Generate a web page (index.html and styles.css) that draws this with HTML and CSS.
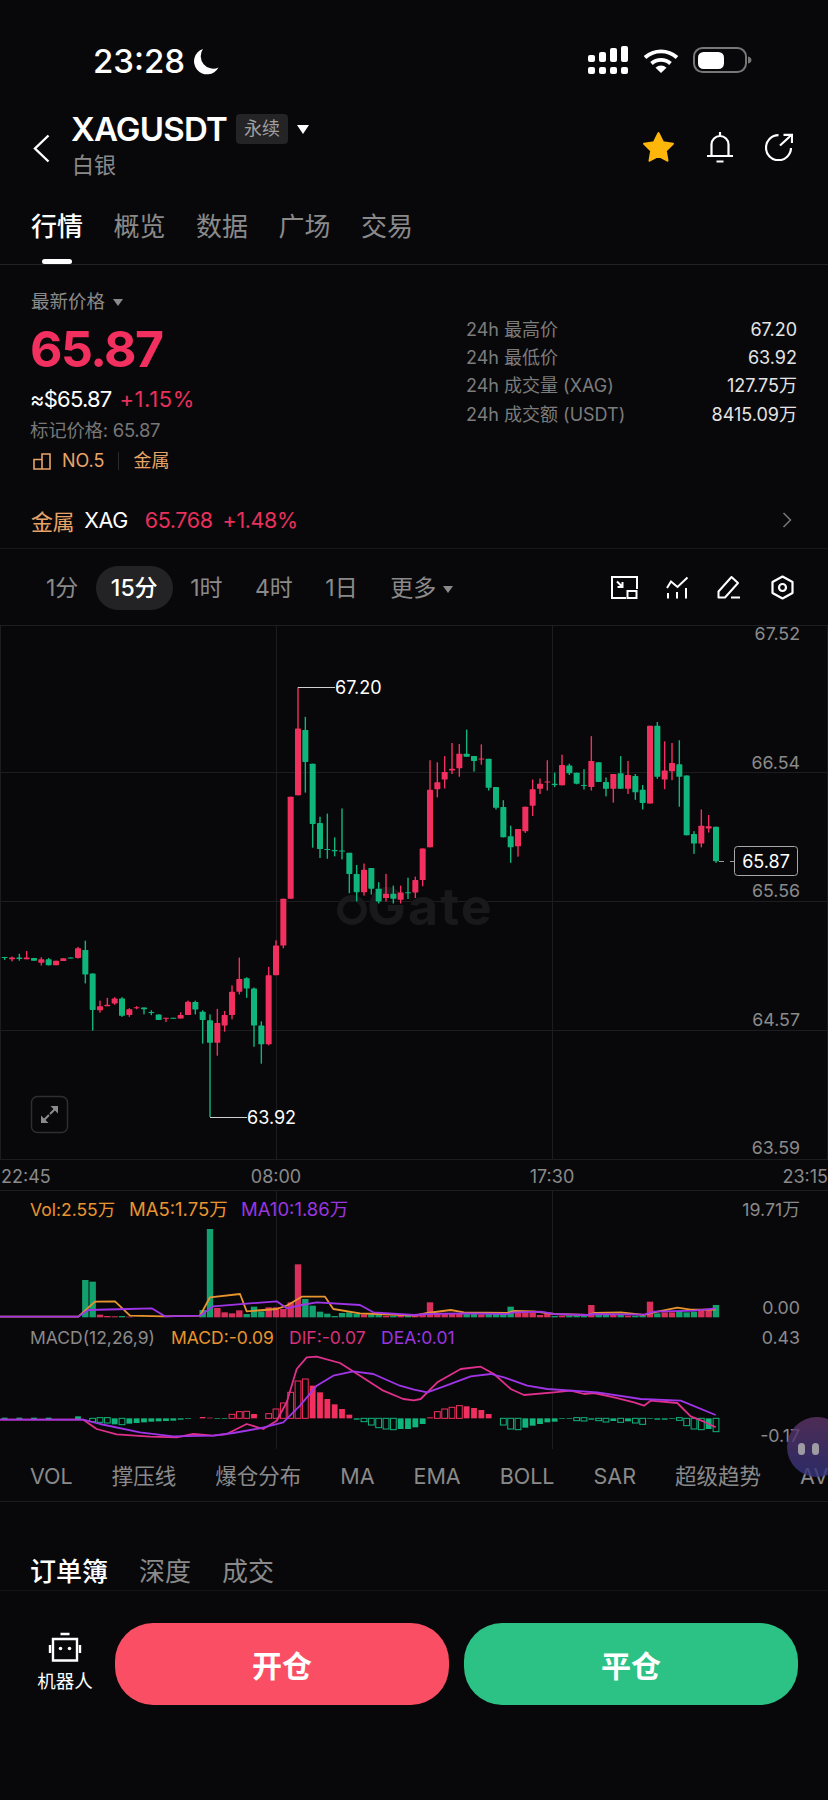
FILE: index.html
```html
<!DOCTYPE html>
<html lang="zh-CN">

<head>
    <meta charset="UTF-8">
    <meta name="viewport" content="width=device-width, initial-scale=1.0">
    <title>XAGUSDT</title>
    <link rel="stylesheet" href="styles.css">
</head>

<body>
    <div class="status-bar">
        <span class="clock">23:28</span>
        <svg class="moon" width="26" height="27" viewBox="0 0 26 27"><path d="M10 1A13 13 0 1 0 25.500 19.500A12.500 12.500 0 0 1 10 1Z" fill="#fff"/></svg>
        <svg class="signal" width="41" height="28" viewBox="0 0 41 28" fill="#fff">
            <rect x="0" y="9" width="7" height="7" rx="2"/><rect x="0" y="21" width="7" height="7" rx="2"/>
            <rect x="11" y="6" width="7" height="10" rx="2"/><rect x="11" y="21" width="7" height="7" rx="2"/>
            <rect x="22" y="2" width="7" height="14" rx="2"/><rect x="22" y="21" width="7" height="7" rx="2"/>
            <rect x="33" y="0" width="7" height="16" rx="2"/><rect x="33" y="21" width="7" height="7" rx="2"/>
        </svg>
        <svg class="wifi" width="36" height="25" viewBox="0 0 36 25">
            <path d="M2 9.500A24 24 0 0 1 34 9.500M8.500 15.500A14 14 0 0 1 27.500 15.500" fill="none" stroke="#fff" stroke-width="3.800"/>
            <path d="M18 25L12.500 19.800A8 8 0 0 1 23.500 19.800Z" fill="#fff"/>
        </svg>
        <svg class="battery" width="59" height="26" viewBox="0 0 59 26">
            <rect x="1" y="1" width="52" height="24" rx="8.500" fill="none" stroke="#777" stroke-width="2"/>
            <rect x="5" y="5" width="26" height="17" rx="5.500" fill="#fff"/>
            <path d="M55 9.500C57.500 10 58.500 11.500 58.500 13C58.500 14.500 57.500 16 55 16.500Z" fill="#777"/>
        </svg>
    </div>

    <header class="top-bar">
        <svg class="back" width="17" height="29" viewBox="0 0 17 29"><path d="M15.500 1.500L2 14.500L15.500 27.500" fill="none" stroke="#fff" stroke-width="2.400"/></svg>
        <div class="pair">
            <div class="pair-line">
                <span class="pair-name">XAGUSDT</span>
                <span class="pair-tag">永续</span>
                <span class="caret caret-white"></span>
            </div>
            <div class="pair-sub">白银</div>
        </div>
        <div class="top-actions">
            <svg width="33" height="32" viewBox="0 0 31 30"><path d="M15.500 2L19.700 10.600L29 11.900L22.300 18.400L23.900 27.800L15.500 23.300L7.100 27.800L8.700 18.400L2 11.900L11.300 10.600Z" fill="#ffb60a" stroke="#ffb60a" stroke-width="2" stroke-linejoin="round"/></svg>
            <svg width="28" height="32" viewBox="0 0 28 32" fill="none" stroke="#fff" stroke-width="2.200"><path d="M5.500 24.500V13.500a8.500 8.500 0 0 1 17 0V24.500M1 25H27M10.500 30.500H17.500M14 1V5"/></svg>
            <svg width="28" height="28" viewBox="0 0 28 28" fill="none" stroke="#fff" stroke-width="2.200"><path d="M13.500 2.200A12.500 12.500 0 1 0 26 15M15 12.500L26.500 2M18.500 1.800H27V10"/></svg>
        </div>
    </header>

    <nav class="main-tabs">
        <a class="main-tab active">行情</a>
        <a class="main-tab">概览</a>
        <a class="main-tab">数据</a>
        <a class="main-tab">广场</a>
        <a class="main-tab">交易</a>
    </nav>

    <section class="price-section">
        <div class="price-left">
            <div class="price-label">最新价格 <span class="caret caret-grey"></span></div>
            <div class="price-big">65.87</div>
            <div class="price-approx"><span class="approx-usd">≈$65.87</span><span class="up">+1.15%</span></div>
            <div class="price-mark">标记价格: 65.87</div>
            <div class="rank-row">
                <svg width="18" height="17" viewBox="0 0 18 17" fill="none" stroke="#e8a468" stroke-width="1.600"><path d="M9 16V1H17V16H1V6.500H9"/></svg>
                <span>NO.5</span>
                <i class="rank-divider"></i>
                <span>金属</span>
            </div>
        </div>
        <dl class="stats">
            <dt>24h 最高价</dt><dd>67.20</dd>
            <dt>24h 最低价</dt><dd>63.92</dd>
            <dt>24h 成交量 (XAG)</dt><dd>127.75万</dd>
            <dt>24h 成交额 (USDT)</dt><dd>8415.09万</dd>
        </dl>
    </section>

    <div class="index-row">
        <span class="index-cat">金属</span>
        <span class="index-name">XAG</span>
        <span class="up">65.768</span>
        <span class="up">+1.48%</span>
        <svg class="index-more" width="10" height="16" viewBox="0 0 10 16"><path d="M1.500 1L8.500 8L1.500 15" fill="none" stroke="#777" stroke-width="1.500"/></svg>
    </div>

    <div class="interval-row">
        <a class="interval">1分</a>
        <a class="interval active">15分</a>
        <a class="interval">1时</a>
        <a class="interval">4时</a>
        <a class="interval">1日</a>
        <a class="interval">更多 <span class="caret caret-grey"></span></a>
        <div class="chart-tools">
            <svg width="27" height="23" viewBox="0 0 27 23" fill="none" stroke="#fff" stroke-width="2"><path d="M15 22H1V1H26V13M16.500 15H25.500V22H16.500ZM6 5.500L11 10.500M6.500 11H11.500V6"/></svg>
            <svg width="23" height="23" viewBox="0 0 23 23" fill="none" stroke="#fff" stroke-width="2"><path d="M1 12L5 5.500L11.500 11L21.500 1.500M2 17V22.500M11 16V22.500M20 12V22.500"/></svg>
            <svg width="24" height="24" viewBox="0 0 24 24" fill="none" stroke="#fff" stroke-width="2" stroke-linejoin="round"><path d="M1.500 22.500V16.500L14.500 2L21 8L8 22.500ZM14 22.500H23"/></svg>
            <svg class="tool-last" width="23" height="25" viewBox="0 0 23 25" fill="none" stroke="#fff" stroke-width="2.200" stroke-linejoin="round"><path d="M11.500 1.500L21.500 7V18L11.500 23.500L1.500 18V7Z"/><circle cx="11.500" cy="12.500" r="3.500"/></svg>
        </div>
    </div>

    <svg class="chart" id="priceChart" width="828" height="565" viewBox="0 626 828 565">
        <g class="grid">
            <path d="M0 626.500H828M0 773.500H828M0 902.500H828M0 1031.500H828M0 1160.500H828M276.500 626V1160M552.500 626V1160M0.500 626V1160M827.500 626V1160"/>
        </g>
        <circle class="mark-ring" cx="352" cy="911" r="12"/>
        <text class="mark-text" x="367" y="926">Gate</text>
        <g id="candles"></g>
        <path class="leader" d="M298 688.500H335M210 1118.500H247"/>
        <path class="last-dash" d="M719 862.500H734"/>
        <text class="peak" x="335" y="695">67.20</text>
        <text class="peak" x="247" y="1125">63.92</text>
        <g class="axis">
            <text x="800" y="641">67.52</text>
            <text x="800" y="770">66.54</text>
            <text x="800" y="898">65.56</text>
            <text x="800" y="1027">64.57</text>
            <text x="800" y="1155">63.59</text>
        </g>
        <rect class="last-box" x="734.500" y="847.500" width="63" height="29" rx="3"/>
        <text class="last-price" x="766" y="868.500">65.87</text>
        <g class="expand">
            <rect x="31.500" y="1097.500" width="36" height="36" rx="6"/>
            <path d="M41 1124V1116.500L48.500 1124ZM58 1107V1114.500L50.500 1107Z"/>
            <path class="expand-stem" d="M44 1121L49 1116M55 1110L50 1115"/>
        </g>
        <g class="time-axis">
            <text x="1" y="1184">22:45</text>
            <text x="276" y="1184" text-anchor="middle">08:00</text>
            <text x="552" y="1184" text-anchor="middle">17:30</text>
            <text x="828" y="1184" text-anchor="end">23:15</text>
        </g>
    </svg>

    <svg class="chart" id="subChart" width="828" height="261" viewBox="0 1191 828 261">
        <g class="grid">
            <path d="M0 1191.500H828M276.500 1191V1450M552.500 1191V1450"/>
        </g>
        <g id="volBars"></g>
        <g id="macdBars"></g>
        <g id="subLines"></g>
        <text class="legend legend-orange" x="30" y="1217">Vol:2.55万</text>
        <text class="legend legend-ma legend-orange" x="129" y="1217">MA5:1.75万</text>
        <text class="legend legend-ma legend-purple" x="241" y="1217">MA10:1.86万</text>
        <text class="legend legend-grey" x="30" y="1345">MACD(12,26,9)</text>
        <text class="legend legend-orange" x="171" y="1345">MACD:-0.09</text>
        <text class="legend legend-pink" x="289" y="1345">DIF:-0.07</text>
        <text class="legend legend-purple" x="381" y="1345">DEA:0.01</text>
        <g class="axis">
            <text x="800" y="1217">19.71万</text>
            <text x="800" y="1315">0.00</text>
            <text x="800" y="1345">0.43</text>
            <text x="800" y="1443">-0.17</text>
        </g>
    </svg>

    <nav class="indicator-tabs">
        <a>VOL</a><a>撑压线</a><a>爆仓分布</a><a>MA</a><a>EMA</a><a>BOLL</a><a>SAR</a><a>超级趋势</a><a>AVL</a>
    </nav>

    <nav class="book-tabs">
        <a class="active">订单簿</a>
        <a>深度</a>
        <a>成交</a>
    </nav>

    <footer class="trade-bar">
        <div class="robot">
            <svg width="34" height="30" viewBox="0 0 34 30" fill="none" stroke="#fff" stroke-width="2.400">
                <path d="M5 7H29V28.500H5ZM12.500 2H21.500M2 13V21M32 13V21"/>
                <circle cx="12.500" cy="16.500" r="1.800" fill="#fff" stroke="none"/>
                <circle cx="21.500" cy="16.500" r="1.800" fill="#fff" stroke="none"/>
            </svg>
            <span>机器人</span>
        </div>
        <button class="trade-button open">开仓</button>
        <button class="trade-button close">平仓</button>
    </footer>

    <div class="bubble"><i></i><i></i></div>

    <script src="chart.js"></script>
</body>

</html>
```

FILE: styles.css
```css
* {
    box-sizing: border-box;
}

html, body {
    margin: 0;
    padding: 0;
}

body {
    position: relative;
    width: 828px;
    height: 1800px;
    overflow: hidden;
    background-color: #08080a;
    color: #fff;
    font-family: Inter, 'Noto Sans CJK SC', sans-serif;
}

.caret {
    display: inline-block;
    width: 0;
    height: 0;
    border-left: 6px solid transparent;
    border-right: 6px solid transparent;
    border-top: 8px solid #8a8a8a;
    vertical-align: middle;
}

.caret-white {
    border-top-color: #fff;
    border-left-width: 6.500px;
    border-right-width: 6.500px;
    border-top-width: 9px;
}

.caret-grey {
    border-left-width: 5px;
    border-right-width: 5px;
    border-top-width: 7px;
}

.up {
    color: #e8305c;
}

/* status bar */
.status-bar {
    display: flex;
    align-items: center;
    height: 108px;
    padding: 12px 0 0 93px;
}

.clock {
    margin-top: 2px;
    font-size: 33px;
    font-weight: 500;
    line-height: 40px;
}

.moon {
    margin-left: 8px;
    margin-top: 2px;
}

.signal {
    margin-left: auto;
}

.wifi {
    margin-left: 14px;
}

.battery {
    margin-left: 14px;
    margin-right: 76px;
}

/* header */
.top-bar {
    position: relative;
    display: flex;
    align-items: flex-start;
    height: 92px;
    padding-left: 33px;
}

.back {
    margin-top: 26px;
}

.pair {
    margin-left: 21px;
}

.pair-line {
    display: flex;
    align-items: center;
    height: 36px;
    margin-top: 3px;
}

.pair-name {
    font-size: 33px;
    font-weight: 600;
    letter-spacing: -0.800px;
}

.pair-tag {
    width: 52px;
    height: 30px;
    margin-left: 9px;
    border-radius: 4px;
    background-color: #242426;
    color: #a0a0a0;
    font-size: 18px;
    line-height: 30px;
    text-align: center;
}

.pair-line .caret {
    margin-left: 9px;
}

.pair-sub {
    margin-top: 4px;
    margin-left: 1px;
    color: #8a8a8a;
    font-size: 22px;
    line-height: 28px;
}

.top-actions {
    display: flex;
    align-items: center;
    gap: 31px;
    margin-left: auto;
    margin-top: 23px;
    padding-right: 35px;
}

/* main tabs */
.main-tabs {
    display: flex;
    gap: 30.500px;
    height: 65px;
    padding-left: 31px;
    border-bottom: 1px solid #222224;
}

.main-tab {
    position: relative;
    color: #8a8a8a;
    font-size: 26px;
    line-height: 54px;
    height: 64px;
}

.main-tab.active {
    color: #fff;
    font-weight: 500;
}

.main-tab.active::after {
    content: '';
    position: absolute;
    left: 11px;
    bottom: 0;
    width: 30px;
    height: 5px;
    border-radius: 3px;
    background-color: #fff;
}

/* latest price */
.price-section {
    display: flex;
    justify-content: space-between;
    height: 227px;
    padding: 23px 31px 0;
}

.price-label {
    color: #8a8a8a;
    font-size: 18.500px;
    line-height: 26px;
}

.price-label .caret {
    margin-left: 3px;
}

.price-big {
    margin-top: 10px;
    margin-left: -1px;
    color: #f2305f;
    font-size: 50px;
    font-weight: 700;
    line-height: 50px;
    letter-spacing: -1.500px;
}

.price-approx {
    display: flex;
    gap: 8px;
    margin-top: 12px;
    font-size: 22px;
    line-height: 26px;
}

.approx-usd {
    margin-left: -1px;
    letter-spacing: -0.800px;
}

.price-approx .up {
    letter-spacing: 0.600px;
}

.price-mark {
    margin-top: 6px;
    margin-left: -1px;
    color: #777;
    font-size: 18.500px;
    line-height: 24px;
    letter-spacing: -0.300px;
}

.rank-row {
    display: flex;
    align-items: center;
    gap: 11px;
    margin-top: 7px;
    color: #e8a468;
    font-size: 18px;
    line-height: 24px;
}

.rank-row svg {
    margin-left: 2px;
}

.rank-divider {
    width: 1px;
    height: 18px;
    margin: 0 3px;
    background-color: #2a2a2c;
}

.stats {
    display: grid;
    grid-template-columns: 1fr auto;
    grid-auto-rows: 28.200px;
    width: 330px;
    height: 113px;
    margin: 28px 0 0;
    font-size: 18px;
    line-height: 28px;
}

.stats dt {
    margin-left: -1px;
    color: #7c7c7c;
}

.stats dd {
    margin: 0;
    color: #e4e4e4;
    text-align: right;
}

/* index price row */
.index-row {
    display: flex;
    align-items: center;
    height: 57px;
    padding: 0 36px 0 31px;
    border-bottom: 1px solid #18181a;
    font-size: 21.500px;
    letter-spacing: -0.400px;
}

.index-cat {
    color: #e8a468;
    font-size: 22px;
}

.index-name {
    margin-left: 10px;
    margin-right: 17px;
}

.index-row .up + .up {
    margin-left: 10px;
}

.index-more {
    margin-left: auto;
}

/* chart intervals */
.interval-row {
    display: flex;
    align-items: center;
    gap: 2.500px;
    height: 76px;
    padding-left: 31px;
}

.interval {
    height: 44px;
    margin-top: 1px;
    padding: 0 15px;
    border-radius: 22px;
    color: #8a8a8a;
    font-size: 23px;
    line-height: 44px;
}

.interval.active {
    background-color: #232325;
    color: #fff;
    font-weight: 500;
}

.interval .caret {
    margin-left: 0;
}

.chart-tools {
    display: flex;
    align-items: center;
    gap: 28px;
    margin-left: auto;
    padding-right: 34px;
}

.tool-last {
    margin-left: 2px;
}

/* charts */
.chart {
    display: block;
    overflow: visible;
}

.grid path {
    fill: none;
    stroke: #1d1d1f;
    stroke-width: 1;
}

.mark-ring {
    fill: none;
    stroke: #19191b;
    stroke-width: 6;
}

.mark-text {
    fill: #19191b;
    font-size: 52px;
    font-weight: 700;
    letter-spacing: 2px;
}

.leader {
    fill: none;
    stroke: #cfcfcf;
    stroke-width: 1.200;
}

.last-dash {
    fill: none;
    stroke: #9a9a9a;
    stroke-width: 1;
    stroke-dasharray: 5 6;
}

.peak {
    fill: #fff;
    font-size: 18px;
}

.axis text {
    fill: #8a8a8a;
    font-size: 17.800px;
    text-anchor: end;
}

.last-box {
    fill: #08080a;
    stroke: #a8a8a8;
    stroke-width: 1;
}

.last-price {
    fill: #fff;
    font-size: 18px;
    text-anchor: middle;
}

.expand rect {
    fill: none;
    stroke: #2e2e30;
    stroke-width: 1.500;
}

.expand path {
    fill: #8a8a8a;
}

.expand .expand-stem {
    fill: none;
    stroke: #8a8a8a;
    stroke-width: 2;
}

.time-axis text {
    fill: #8a8a8a;
    font-size: 18px;
}

.legend {
    font-size: 17.500px;
}

.legend-ma {
    font-size: 18.500px;
}

.legend-orange {
    fill: #e8952f;
}

.legend-purple {
    fill: #9a35e0;
}

.legend-pink {
    fill: #d8307c;
}

.legend-grey {
    fill: #8a8a8a;
}

/* indicators */
.indicator-tabs {
    display: flex;
    gap: 39px;
    height: 51px;
    padding-left: 30px;
    overflow: hidden;
    border-bottom: 1px solid #1c1c1e;
    color: #8a8a8a;
    font-size: 21.500px;
    line-height: 50px;
    white-space: nowrap;
}

/* order book tabs */
.book-tabs {
    display: flex;
    gap: 31px;
    height: 89px;
    padding: 50px 0 0 30px;
    border-bottom: 1px solid #141416;
    color: #8a8a8a;
    font-size: 26px;
    line-height: 40px;
}

.book-tabs .active {
    color: #fff;
    font-weight: 500;
}

/* bottom bar */
.trade-bar {
    display: flex;
    align-items: flex-start;
    gap: 15px;
    padding-top: 32px;
}

.robot {
    display: flex;
    flex-direction: column;
    align-items: center;
    width: 115px;
    margin-right: -15px;
    padding: 9px 0 0 15px;
    font-size: 18.500px;
    line-height: 24px;
}

.robot span {
    margin-top: 7px;
}

.trade-button {
    width: 334px;
    height: 82px;
    border: none;
    border-radius: 38px;
    color: #fff;
    font-family: inherit;
    font-size: 30px;
    font-weight: 600;
}

.trade-button.open {
    background-color: #f94e64;
}

.trade-button.close {
    background-color: #2cc286;
}

/* floating assistant */
.bubble {
    position: absolute;
    left: 787px;
    top: 1417px;
    display: flex;
    justify-content: flex-start;
    gap: 7px;
    width: 60px;
    height: 60px;
    padding: 26px 0 0 11px;
    border-radius: 50%;
    background: linear-gradient(#5f3668, #35347e);
    opacity: 0.8;
}

.bubble i {
    width: 7px;
    height: 12px;
    border-radius: 4px;
    background-color: #c4c0ca;
}
```

FILE: chart.js
```js
const RED = '#f2305f';
const GREEN = '#10b57c';
const BAR_RED = '#d8305a';
const BAR_GREEN = '#12a06f';
const SVG_NS = 'http://www.w3.org/2000/svg';

// candle slots are 7.33px wide, first one centred at 4.67px
function slotX(k) {
    return (14 + 22 * k) / 3;
}

// price chart heights were measured at 2.9 units per px from y=640
function priceY(v) {
    return 640 + v * 0.3444;
}

// lower panes were measured at 3 units per px from y=1180
function subY(v) {
    return 1180 + v / 3;
}

function add(parent, tag, attrs) {
    const el = document.createElementNS(SVG_NS, tag);
    for (const name in attrs) {
        el.setAttribute(name, attrs[name]);
    }
    parent.appendChild(el);
    return el;
}

// colour, high, body top, body bottom, low
const candles = [
    'g 923 923 926 932', 'r 922 925 930 936', 'g 914 925 929 934', 'r 906 925 930 930',
    'g 926 926 934 934', 'r 924 930 940 948', 'g 926 930 947 948', 'r 934 934 947 947',
    'r 927 927 935 935', 'g 925 925 928 928', 'r 894 898 926 928', 'g 876 903 974 1000',
    'g 971 971 1077 1137', 'r 1050 1066 1078 1085', 'r 1042 1062 1066 1066', 'r 1040 1044 1058 1062',
    'g 1040 1044 1094 1097', 'r 1072 1075 1092 1097', 'r 1066 1069 1072 1075', 'g 1070 1070 1075 1090',
    'g 1078 1083 1086 1092', 'g 1090 1090 1106 1106', 'r 1100 1100 1103 1112', 'g 1100 1100 1102 1102',
    'r 1084 1092 1102 1102', 'r 1050 1053 1092 1092', 'g 1050 1054 1076 1090', 'g 1078 1082 1106 1175',
    'g 1090 1107 1172 1388', 'r 1074 1115 1172 1210', 'r 1080 1092 1122 1140', 'r 1006 1024 1092 1104',
    'r 925 987 1024 1032', 'g 982 985 1015 1042', 'g 1012 1015 1122 1184', 'g 1110 1122 1177 1233',
    'r 952 976 1177 1180', 'r 875 890 976 976', 'r 754 754 890 898', 'r 458 458 754 754',
    'r 140 260 454 454', 'g 226 264 357 446', 'g 362 362 537 606', 'g 516 534 610 636',
    'g 507 610 613 638', 'g 576 613 616 631', 'g 492 614 617 640', 'g 621 621 682 738',
    'g 656 682 735 762', 'r 652 670 735 745', 'g 665 665 725 742', 'g 706 725 762 768',
    'r 682 740 752 762', 'g 716 740 754 768', 'r 716 736 757 768', 'g 693 735 738 755',
    'r 690 700 736 752', 'r 608 608 700 718', 'r 352 438 605 605', 'r 358 416 436 460',
    'r 340 386 408 434', 'r 302 377 382 392', 'r 305 333 375 400', 'g 263 333 342 342',
    'g 340 340 354 385', 'r 306 347 350 365', 'g 348 348 432 440', 'g 430 430 490 495',
    'g 468 488 576 576', 'g 542 573 605 650', 'r 552 552 602 632', 'r 487 487 558 563',
    'r 408 436 484 514', 'r 405 420 435 450', 'r 352 414 417 440', 'g 388 420 424 430',
    'r 336 366 425 425', 'g 362 367 390 395', 'g 388 388 420 422', 'g 378 424 427 437',
    'r 282 354 430 440', 'g 358 358 415 415', 'g 402 415 435 457', 'r 392 392 435 475',
    'g 340 390 435 435', 'r 354 395 435 450', 'g 392 398 445 467', 'g 424 438 476 495',
    'r 252 252 478 478', 'g 241 252 400 406', 'r 297 382 408 436', 'r 302 360 384 410',
    'g 294 364 400 487', 'g 396 396 570 570', 'g 558 566 594 624', 'r 495 542 594 605',
    'r 511 544 550 562', 'g 545 545 645 650'
];

const candleGroup = document.getElementById('candles');
candles.forEach((row, k) => {
    const parts = row.split(' ');
    const [high, top, bottom, low] = parts.slice(1).map(priceY);
    const color = parts[0] === 'r' ? RED : GREEN;
    const x = slotX(k);
    add(candleGroup, 'rect', { x: x - 0.7, y: high, width: 1.4, height: low - high, fill: color });
    add(candleGroup, 'rect', { x: x - 3, y: top, width: 6, height: Math.max(bottom - top, 1), rx: 0.6, fill: color });
});

// slot, bar top, colour (zero level is 415)
const volumes = [
    [11, 303, 'g'], [12, 308, 'g'], [13, 407, 'r'], [14, 411, 'r'], [15, 412, 'r'], [16, 411, 'g'], [17, 413, 'r'],
    [27, 393, 'g'], [28, 150, 'g'], [29, 387, 'r'], [30, 400, 'r'], [31, 403, 'r'], [32, 394, 'r'], [33, 405, 'g'],
    [34, 383, 'g'], [35, 397, 'g'], [36, 385, 'r'], [37, 385, 'r'], [38, 390, 'r'], [39, 370, 'r'], [40, 256, 'r'],
    [41, 360, 'g'], [42, 380, 'g'], [43, 398, 'g'], [44, 404, 'g'], [45, 411, 'g'], [46, 402, 'g'], [47, 400, 'g'],
    [48, 404, 'g'], [49, 406, 'r'], [50, 406, 'g'], [51, 408, 'g'], [52, 411, 'r'], [53, 411, 'g'], [54, 410, 'r'],
    [55, 410, 'g'], [56, 409, 'r'], [57, 408, 'r'], [58, 370, 'r'], [59, 403, 'r'], [60, 403, 'r'], [61, 403, 'r'],
    [62, 403, 'r'], [63, 403, 'g'], [64, 403, 'g'], [65, 406, 'r'], [66, 404, 'g'], [67, 404, 'g'], [68, 404, 'g'],
    [69, 383, 'g'], [70, 400, 'r'], [71, 400, 'r'], [72, 400, 'r'], [73, 408, 'r'], [74, 403, 'r'], [75, 411, 'g'],
    [76, 410, 'r'], [77, 410, 'g'], [78, 410, 'g'], [79, 410, 'g'], [80, 378, 'r'], [81, 408, 'g'], [82, 408, 'g'],
    [83, 405, 'r'], [84, 408, 'g'], [85, 410, 'r'], [86, 410, 'g'], [87, 410, 'g'], [88, 368, 'r'], [89, 403, 'g'],
    [90, 400, 'r'], [91, 400, 'r'], [92, 395, 'g'], [93, 400, 'g'], [94, 398, 'g'], [95, 393, 'r'], [96, 393, 'r'],
    [97, 378, 'g']
];

const volGroup = document.getElementById('volBars');
volumes.forEach(([k, top, c]) => {
    add(volGroup, 'rect', {
        x: slotX(k) - 3.2,
        y: subY(top),
        width: 6.4,
        height: subY(415) - subY(top),
        fill: c === 'r' ? BAR_RED : BAR_GREEN
    });
});

// slot, top, bottom, hollow (zero level is 718)
const macd = [
    [0, 716, 722], [2, 716, 722], [4, 716, 722], [6, 716, 722], [10, 712, 720],
    [12, 718, 728, 1], [13, 716, 730, 1], [14, 716, 732, 1], [15, 718, 736], [16, 718, 737, 1], [17, 718, 734],
    [18, 718, 732], [19, 718, 730], [20, 718, 728], [21, 718, 727], [22, 718, 726], [23, 718, 725], [24, 718, 722],
    [25, 718, 720], [27, 714, 718], [28, 716, 718], [29, 718, 720], [30, 718, 720],
    [31, 706, 718, 1], [32, 698, 718, 1], [33, 697, 718, 1], [34, 705, 718], [36, 704, 718, 1], [37, 690, 718, 1],
    [38, 672, 718, 1], [39, 640, 718, 1], [40, 606, 718, 1], [41, 600, 718, 1], [42, 620, 718], [43, 640, 718],
    [44, 660, 718], [45, 676, 718], [46, 690, 718], [47, 707, 718],
    [48, 718, 722], [49, 718, 728, 1], [50, 718, 738, 1], [51, 718, 746, 1], [52, 718, 750, 1], [53, 718, 752, 1],
    [54, 718, 750], [55, 718, 750], [56, 718, 745], [57, 718, 735],
    [58, 715, 718], [59, 698, 718, 1], [60, 690, 718, 1], [61, 685, 718, 1], [62, 680, 718, 1], [63, 682, 718],
    [64, 687, 718], [65, 693, 718], [66, 705, 718],
    [68, 718, 738, 1], [69, 718, 750, 1], [70, 718, 752, 1], [71, 718, 746], [72, 718, 740], [73, 718, 735],
    [74, 718, 730], [75, 718, 728], [76, 718, 720], [77, 718, 720], [78, 716, 725, 1], [79, 716, 726, 1], [80, 718, 722],
    [81, 718, 725, 1], [82, 718, 729, 1], [83, 718, 726], [84, 718, 730, 1], [85, 718, 727], [86, 718, 732, 1],
    [87, 718, 736, 1], [88, 718, 720], [89, 718, 722], [90, 718, 722], [91, 718, 720], [92, 716, 724, 1],
    [93, 718, 740, 1], [94, 718, 750, 1], [95, 718, 752, 1], [96, 718, 750], [97, 718, 758, 1]
];

const macdGroup = document.getElementById('macdBars');
macd.forEach(([k, top, bottom, hollow]) => {
    const color = bottom > 718 ? GREEN : RED;
    add(macdGroup, 'rect', {
        x: slotX(k) - 2.9,
        y: subY(top),
        width: 5.8,
        height: subY(bottom) - subY(top),
        fill: hollow ? 'none' : color,
        stroke: hollow ? color : 'none',
        'stroke-width': 1
    });
});

const lines = [
    { color: '#e8952f', points: [0,413, 235,413, 285,368, 345,367, 390,410, 490,412, 600,410, 630,355, 720,345, 740,397, 830,390, 860,380, 905,353, 975,353, 1000,390, 1080,403, 1130,405, 1242,410, 1282,402, 1352,393, 1392,400, 1522,402, 1542,396, 1602,397, 1662,405, 1762,408, 1782,402, 1862,400, 1932,408, 1962,400, 2032,386, 2072,392, 2147,392] },
    { color: '#a035e8', points: [0,413, 235,413, 265,393, 385,390, 455,388, 495,412, 600,410, 640,382, 830,367, 860,388, 905,378, 950,370, 1080,378, 1120,400, 1242,408, 1282,405, 1392,403, 1522,405, 1542,400, 1622,398, 1662,405, 1762,408, 1782,405, 1932,407, 1962,398, 2082,395, 2147,388] },
    { color: '#e0308c', points: [0,722, 250,722, 290,750, 350,766, 450,773, 530,775, 580,765, 640,770, 680,765, 740,735, 790,750, 830,725, 860,670, 890,570, 920,535, 950,533, 1020,552, 1080,590, 1150,635, 1210,660, 1242,664, 1262,660, 1312,610, 1382,570, 1442,563, 1482,585, 1532,630, 1572,648, 1662,640, 1712,635, 1752,645, 1782,642, 1842,655, 1902,670, 1932,680, 1952,665, 2032,672, 2072,712, 2112,728, 2147,745] },
    { color: '#a035e8', points: [0,722, 250,722, 300,735, 420,760, 520,772, 640,770, 700,762, 780,748, 850,730, 900,680, 950,620, 1000,590, 1060,577, 1120,585, 1200,620, 1242,632, 1282,640, 1332,622, 1412,592, 1472,585, 1512,595, 1582,620, 1642,630, 1792,640, 1922,660, 2042,665, 2147,708] }
];

const lineGroup = document.getElementById('subLines');
lines.forEach(line => {
    const pts = [];
    for (let i = 0; i < line.points.length; i += 2) {
        pts.push((line.points[i] / 3).toFixed(1) + ',' + subY(line.points[i + 1]).toFixed(1));
    }
    add(lineGroup, 'polyline', {
        points: pts.join(' '),
        fill: 'none',
        stroke: line.color,
        'stroke-width': 1.8,
        'stroke-linejoin': 'round'
    });
});
```
